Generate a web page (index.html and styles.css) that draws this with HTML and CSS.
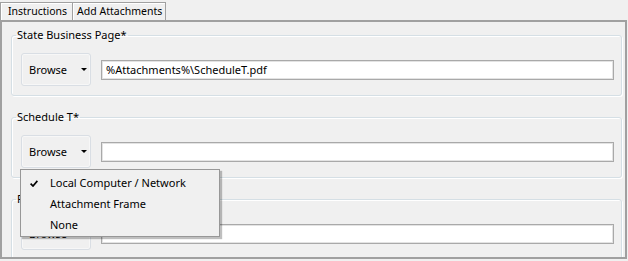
FILE: index.html
```html
<!DOCTYPE html>
<html>
<head>
<meta charset="utf-8">
<link rel="stylesheet" href="styles.css">
</head>
<body>
<div class="window">
  <div class="tabs">
    <div class="tab tab-first">Instructions</div>
    <div class="tab">Add Attachments</div>
  </div>
  <div class="panel">
    <fieldset class="group">
      <legend>State Business Page*</legend>
      <div class="row">
        <div class="browse"><span>Browse</span><span class="caret"></span></div>
        <div class="field">%Attachments%\ScheduleT.pdf</div>
      </div>
    </fieldset>
    <fieldset class="group">
      <legend>Schedule T*</legend>
      <div class="row">
        <div class="browse"><span>Browse</span><span class="caret"></span>
          <div class="menu">
            <div class="item"><svg class="check" width="8" height="7" viewBox="0 0 8 7"><path d="M0.6 3.6 L3 6 L7.4 0.9" fill="none" stroke="#000" stroke-width="1.7"/></svg>Local Computer / Network</div>
            <div class="item">Attachment Frame</div>
            <div class="item">None</div>
          </div>
        </div>
        <div class="field"></div>
      </div>
    </fieldset>
    <fieldset class="group">
      <legend>Federal Form*</legend>
      <div class="row">
        <div class="browse"><span>Browse</span><span class="caret"></span></div>
        <div class="field"></div>
      </div>
    </fieldset>
  </div>
</div>
</body>
</html>
```

FILE: styles.css
```css
html, body {
  margin: 0;
  padding: 0;
  background: #f0f0f0;
}
body {
  font-family: "Noto Sans", sans-serif;
  font-size: 11px;
  color: #000;
}
.window {
  width: 628px;
  height: 261px;
  overflow: hidden;
}
.tabs {
  display: flex;
  align-items: flex-end;
  height: 20px;
}
.tab {
  height: 17px;
  line-height: 17px;
  font-size: 10.5px;
  padding: 0 3px 0 4px;
  border: 1px solid #a0a0a0;
  border-bottom: none;
  margin-left: -1px;
  box-shadow: inset 1px 1px 0 #fff;
}
.tab-first {
  margin-left: 0;
  padding: 0 5px 0 7px;
}
.panel {
  width: 627px;
  height: 239px;
  box-sizing: border-box;
  border: 2px solid #a0a0a0;
  padding: 6px 3px 0 9px;
  overflow: hidden;
}
.group {
  margin: 0 0 14px 0;
  padding: 11px 7px 9px 9px;
  border: 1px solid #d5dfe5;
  border-radius: 3px;
  box-shadow: 1px 1px 0 #fff, inset 1px 1px 0 #fff;
  min-width: 0;
}
.group legend {
  font-size: 11px;
  line-height: 14px;
  padding: 0 1px;
  margin-left: -5px;
}
.row {
  display: flex;
  align-items: center;
  gap: 10px;
}
.browse {
  position: relative;
  width: 70px;
  height: 33px;
  box-sizing: border-box;
  border: 1px solid #d9dee4;
  border-radius: 3px;
  box-shadow: inset 0 0 0 1px #f7f7f7;
  display: flex;
  align-items: center;
  padding-left: 7px;
  flex: none;
}
.caret {
  margin-left: auto;
  margin-right: 3px;
  width: 0;
  height: 0;
  border-left: 3px solid transparent;
  border-right: 3px solid transparent;
  border-top: 3px solid #000;
}
.field {
  flex: 1;
  height: 20px;
  box-sizing: border-box;
  background: #fff;
  border: 1px solid #a9a9a9;
  box-shadow: inset 0 0 0 1px #e3e3e3;
  padding-left: 4px;
  line-height: 18px;
}
.menu {
  position: absolute;
  left: -2px;
  top: 33px;
  width: 200px;
  box-sizing: border-box;
  background: #f0f0f0;
  border: 1px solid #979797;
  box-shadow: 2px 2px 1px rgba(0,0,0,0.25);
  padding: 2px 0 1px 0;
  z-index: 2;
}
.item {
  position: relative;
  height: 21px;
  line-height: 21px;
  padding-left: 29px;
}
.check {
  position: absolute;
  left: 9px;
  top: 8px;
}
```
